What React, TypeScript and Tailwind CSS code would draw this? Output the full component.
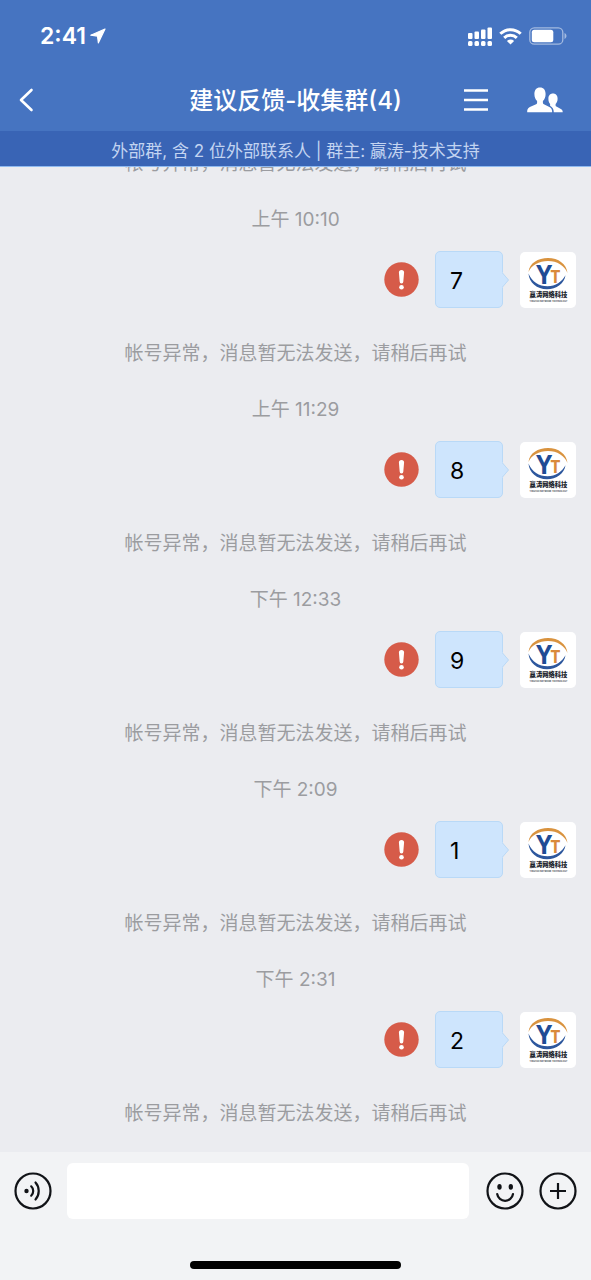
interface IMessage {
  time: string;
  text: string;
}

const NOTICE = "帐号异常，消息暂无法发送，请稍后再试";

const messages: IMessage[] = [
  { time: "上午 10:10", text: "7" },
  { time: "上午 11:29", text: "8" },
  { time: "下午 12:33", text: "9" },
  { time: "下午 2:09", text: "1" },
  { time: "下午 2:31", text: "2" },
];

const StatusBar = () => (
  <div className="flex h-[70px] items-center justify-between pt-[2px] pl-10 pr-6">
    <div className="flex items-center gap-1">
      <span className="text-[23px] leading-7 font-semibold">2:41</span>
      <svg width="16" height="16" viewBox="0 0 16 16" fill="currentColor" stroke="currentColor" strokeLinejoin="round">
        <path d="M15 1 .8 7.200l6.700.9.900 6.700z" strokeWidth="1.200" />
      </svg>
    </div>
    <div className="flex items-center gap-[7px]">
      <svg width="24" height="19" viewBox="0 0 24 19" fill="currentColor">
        <rect x="0" y="6" width="4.500" height="6" rx="1" />
        <rect x="6.500" y="4.500" width="4.500" height="7.500" rx="1" />
        <rect x="13" y="2.500" width="4.500" height="9.500" rx="1" />
        <rect x="19.500" y="0.500" width="4.500" height="11.500" rx="1" />
        <rect x="0" y="14" width="4.500" height="5" rx="1.500" />
        <rect x="6.500" y="14" width="4.500" height="5" rx="1.500" />
        <rect x="13" y="14" width="4.500" height="5" rx="1.500" />
        <rect x="19.500" y="14" width="4.500" height="5" rx="1.500" />
      </svg>
      <svg width="23" height="17" viewBox="0 0 23 17" fill="none" stroke="currentColor" strokeWidth="3">
        <path d="M1.300 5.800a14.600 14.600 0 0 1 20.400 0" />
        <path d="M5.200 9.900a9 9 0 0 1 12.600 0" />
        <path d="M11.500 16.600 7.900 13a5.200 5.200 0 0 1 7.200 0z" fill="currentColor" stroke="none" />
      </svg>
      <svg width="38" height="18" viewBox="0 0 38 18" fill="none">
        <rect x="0.800" y="0.800" width="33" height="16.400" rx="4.500" stroke="#fff" strokeOpacity="0.5" strokeWidth="1.300" />
        <rect x="2.800" y="2.800" width="21.500" height="12.400" rx="2.500" fill="#fff" />
        <path d="M35.500 6v6c1-.4 2-1.600 2-3s-1-2.600-2-3z" fill="#fff" fillOpacity="0.5" />
      </svg>
    </div>
  </div>
);

const TitleBar = () => (
  <div className="grid h-[61px] grid-cols-[1fr_auto_1fr] items-center pb-[2px] pl-[18px] pr-7">
    <button type="button" aria-label="返回" className="w-6">
      <svg width="16" height="24" viewBox="0 0 16 24" fill="none" stroke="currentColor" strokeWidth="2.600" strokeLinecap="round" strokeLinejoin="round">
        <path d="M13.500 2 3 12l10.500 10" />
      </svg>
    </button>
    <h1 className="pt-[2px] pl-[10px] text-[24px] leading-8 font-medium">建议反馈-收集群(4)</h1>
    <div className="flex items-center justify-end gap-[39px]">
      <button type="button" aria-label="菜单">
        <svg width="24" height="24" viewBox="0 0 24 24" stroke="currentColor" strokeWidth="2.600">
          <path d="M0 2.500h24M0 12h24M0 21.500h24" />
        </svg>
      </button>
      <button type="button" aria-label="群成员">
        <svg width="36" height="26" viewBox="0 0 36 26" fill="currentColor">
          <path d="M13 .5c3.700 0 5.600 2.700 5.600 6.500 0 3-1 5.400-2.700 7v1.800c0 .7.400 1.200 1 1.500l5 2.400c2 .9 3.200 2.300 3.200 4.300v1.200H.2V24c0-2 1.200-3.400 3.200-4.300l5.700-2.400c.6-.3 1-.8 1-1.500V14c-1.700-1.600-2.700-4-2.700-7C7.400 3.200 9.300.5 13 .5z" />
          <path d="M26 6.500c3 0 4.600 2.200 4.600 5.200 0 2.300-.8 4.100-2 5.400v1.400c0 .5.300.9.800 1.100l3.600 1.900c1.700.8 2.700 1.800 2.700 3.200v.5h-8.900c-.1-3-1.400-5-3.700-6.400v-1.700c-1.100-1.300-1.700-3.100-1.700-5.400 0-3 1.600-5.200 4.600-5.200z" />
        </svg>
      </button>
    </div>
  </div>
);

const Avatar = () => (
  <svg width="56" height="56" viewBox="0 0 56 56" className="shrink-0 rounded-[5px] bg-white" role="img" aria-label="赢涛网络科技">
    <path d="M8.500 20C9.500 11 18 6 28 6c10.500 0 18.500 6 19.500 15C44.500 13.500 37 9 28 9c-9 0-16.500 4-19.500 11z" fill="#d9933f" />
    <path d="M8.500 21.500c.5 9 8.500 15.800 18.500 15.800 9.500 0 17.500-6 18.500-14-3.500 6.500-10 11-18 11-8.500 0-15.500-4.400-19-12.800z" fill="#2d579d" />
    <text x="24" y="32" textAnchor="middle" fontSize="26" fontWeight="700" fill="#1f4b94" className="font-['Open_Sans',sans-serif]">Y</text>
    <text x="35.500" y="31" textAnchor="middle" fontSize="17" fontWeight="700" fill="#d9893b" className="font-['Open_Sans',sans-serif]">T</text>
    <text x="28.500" y="45" textAnchor="middle" fontSize="6.300" fontWeight="900" fill="#20242c">赢涛网络科技</text>
    <text x="28.500" y="49.500" textAnchor="middle" fontSize="2.200" fontWeight="700" fill="#4a4d55">YINGTAO NETWORK TECHNOLOGY</text>
  </svg>
);

const Notice = () => (
  <p className="text-center text-[19px] leading-7 text-[#9b9ca0]">{NOTICE}</p>
);

const Message = ({ message }: { message: IMessage }) => (
  <li className="pt-7">
    <p className="text-center text-[19px] leading-7 text-[#9b9ca0]">{message.time}</p>
    <div className="mt-[17px] mb-8 flex h-[57px] items-center justify-end pr-[15px]">
      <button type="button" aria-label="重新发送">
        <svg width="35" height="35" viewBox="0 0 35 35">
          <circle cx="17.500" cy="17.500" r="17.200" fill="#d65b49" />
          <path d="M14.900 10.500a2.600 2.600 0 0 1 5.200 0l-.8 9.300a1.800 1.800 0 0 1-3.600 0z" fill="#fff" />
          <circle cx="17.500" cy="25.300" r="2.300" fill="#fff" />
        </svg>
      </button>
      <div className="relative ml-4 mr-[17px] flex h-full w-[68px] items-center rounded-[5px] border border-[#b9d9f7] bg-[#cee5fd] pt-[2px] pl-[14px] text-[23px] leading-8 text-black">
        {message.text}
        <svg width="9" height="16" viewBox="0 0 9 16" className="absolute top-5 -right-2">
          <path d="M0 0h1.500v1l6 7-6 7v1H0z" fill="#cee5fd" />
          <path d="M1.500 1l6 7-6 7" fill="none" stroke="#b9d9f7" />
        </svg>
      </div>
      <Avatar />
    </div>
    <Notice />
  </li>
);

const Composer = () => (
  <footer className="bg-[#f2f3f5] pt-[11px] pb-[11px] text-[#111317]">
    <form className="flex items-center px-[14px]">
      <button type="button" aria-label="语音">
        <svg width="38" height="38" viewBox="0 0 38 38" fill="none" stroke="currentColor" strokeWidth="2.200" strokeLinecap="round">
          <circle cx="19" cy="19" r="17.500" />
          <circle cx="12.500" cy="19" r="2.200" fill="currentColor" stroke="none" />
          <path d="M17.200 14.300a6.500 6.500 0 0 1 0 9.400M21.500 10.500c4.300 4.700 4.300 12.300 0 17" />
        </svg>
      </button>
      <input
        type="text"
        aria-label="消息"
        className="mx-[15px] h-14 min-w-0 flex-1 rounded-md bg-white px-3 text-[22px] outline-none"
      />
      <div className="ml-[2px] flex gap-[15px]">
        <button type="button" aria-label="表情">
          <svg width="38" height="38" viewBox="0 0 38 38" fill="none" stroke="currentColor" strokeWidth="2.200" strokeLinecap="round">
            <circle cx="19" cy="19" r="17.500" />
            <ellipse cx="13.500" cy="14.800" rx="2.200" ry="2.900" fill="currentColor" stroke="none" />
            <ellipse cx="24.800" cy="14.800" rx="2.200" ry="2.900" fill="currentColor" stroke="none" />
            <path d="M11.200 22c.6 4 4 6.800 7.900 6.800S26.400 26 27 22" />
          </svg>
        </button>
        <button type="button" aria-label="更多">
          <svg width="38" height="38" viewBox="0 0 38 38" fill="none" stroke="currentColor" strokeWidth="2.200">
            <circle cx="19" cy="19" r="17.500" />
            <path d="M19 11v16M11 19h16" />
          </svg>
        </button>
      </div>
    </form>
    <div className="mx-auto mt-[42px] h-2 w-[211px] rounded-full bg-black" />
  </footer>
);

const App = () => {
  return (
    <div className="flex h-screen flex-col bg-[#ebecf0] font-[Inter,'Noto_Sans_CJK_SC',sans-serif]" lang="zh-CN">
      <header className="bg-[#4674c1] text-white">
        <StatusBar />
        <TitleBar />
        <p className="h-9 border-b border-[#8fbaf0] bg-[#3964b5] pt-[5px] text-center text-[17px] leading-[30px] text-[#c3d4f1]">
          外部群, 含 2 位外部联系人 | 群主: 赢涛-技术支持
        </p>
      </header>
      {/* pinned to the newest message, older ones run under the header */}
      <main className="flex min-h-0 flex-1 flex-col justify-end overflow-hidden pb-6">
        <Notice />
        <ul>
          {messages.map((message) => (
            <Message key={message.time} message={message} />
          ))}
        </ul>
      </main>
      <Composer />
    </div>
  );
};

export default App;
